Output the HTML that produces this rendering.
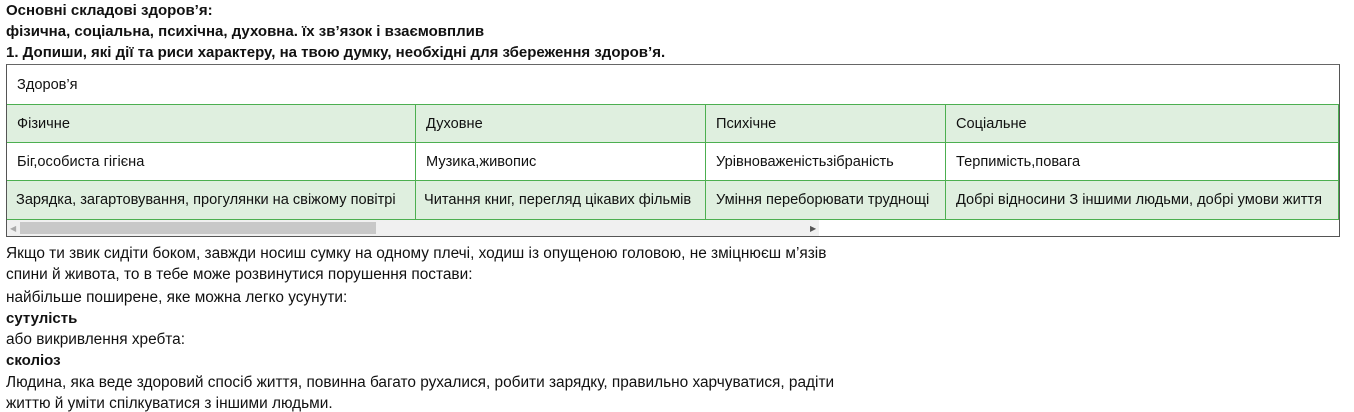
<!DOCTYPE html>
<html><head><meta charset="utf-8"><style>
body{margin:0;width:1354px;height:411px;background:#fff;position:relative;overflow:hidden;font-family:"Liberation Sans",sans-serif;color:#111}
.l{position:absolute;left:6px;white-space:nowrap;font-size:15.4px;line-height:16px}
.b{font-weight:bold;font-size:15px}
.box{position:absolute;left:6px;top:64px;width:1334px;height:173px;border:1px solid #555;border-top-color:#666;box-sizing:border-box}
.c{position:absolute;box-sizing:border-box;border-right:1px solid #4caf50;border-bottom:1px solid #4caf50;padding-left:10px;font-size:14.6px;white-space:nowrap}
.g{background:#dfefdf}
</style></head><body>
<div class="l b" style="top:3px">Основні складові здоров’я:</div>
<div class="l b" style="top:24px">фізична, соціальна, психічна, духовна. їх зв’язок і взаємовплив</div>
<div class="l b" style="top:45px">1. Допиши, які дії та риси характеру, на твою думку, необхідні для збереження здоров’я.</div>
<div class="box"></div>
<div class="c" style="left:7px;top:65px;width:1332px;height:40px;line-height:40px;border-right:none">Здоров’я</div>
<div class="c g" style="left:7px;top:105px;width:409px;height:38px;line-height:38px">Фізичне</div>
<div class="c g" style="left:416px;top:105px;width:290px;height:38px;line-height:38px">Духовне</div>
<div class="c g" style="left:706px;top:105px;width:240px;height:38px;line-height:38px">Психічне</div>
<div class="c g" style="left:946px;top:105px;width:393px;height:38px;line-height:38px">Соціальне</div>
<div class="c" style="left:7px;top:143px;width:409px;height:38px;line-height:38px">Біг,особиста гігієна</div>
<div class="c" style="left:416px;top:143px;width:290px;height:38px;line-height:38px">Музика,живопис</div>
<div class="c" style="left:706px;top:143px;width:240px;height:38px;line-height:38px">Урівноваженістьзібраність</div>
<div class="c" style="left:946px;top:143px;width:393px;height:38px;line-height:38px">Терпимість,повага</div>
<div class="c g" style="left:7px;top:181px;width:409px;height:39px;line-height:38px;padding-left:9px">Зарядка, загартовування, прогулянки на свіжому повітрі</div>
<div class="c g" style="left:416px;top:181px;width:290px;height:39px;line-height:38px;padding-left:8px">Читання книг, перегляд цікавих фільмів</div>
<div class="c g" style="left:706px;top:181px;width:240px;height:39px;line-height:38px">Уміння переборювати труднощі</div>
<div class="c g" style="left:946px;top:181px;width:393px;height:39px;line-height:38px">Добрі відносини З іншими людьми, добрі умови життя</div>
<div style="position:absolute;left:7px;top:220px;width:812px;height:16px;background:#f0f0f0"></div>
<div style="position:absolute;left:20px;top:222px;width:356px;height:12px;background:#c8c8c8"></div>
<div style="position:absolute;left:10px;top:224px;font-size:8px;color:#aaa">◀</div>
<div style="position:absolute;left:810px;top:224px;font-size:8px;color:#555">▶</div>
<div class="l" style="top:246px">Якщо ти звик сидіти боком, завжди носиш сумку на одному плечі, ходиш із опущеною головою, не зміцнюєш м’язів</div>
<div class="l" style="top:267px">спини й живота, то в тебе може розвинутися порушення постави:</div>
<div class="l" style="top:290px">найбільше поширене, яке можна легко усунути:</div>
<div class="l b" style="top:311px">сутулість</div>
<div class="l" style="top:332px">або викривлення хребта:</div>
<div class="l b" style="top:353px">сколіоз</div>
<div class="l" style="top:375px">Людина, яка веде здоровий спосіб життя, повинна багато рухалися, робити зарядку, правильно харчуватися, радіти</div>
<div class="l" style="top:396px">життю й уміти спілкуватися з іншими людьми.</div>
</body></html>
